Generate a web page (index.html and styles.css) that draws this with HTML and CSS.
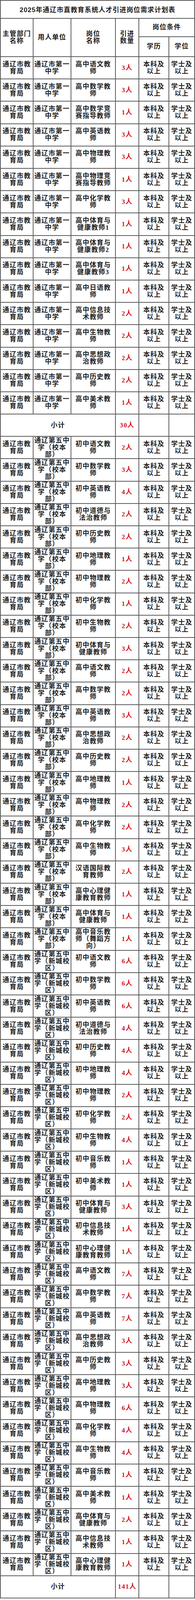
FILE: index.html
```html
<!DOCTYPE html>
<html lang="zh-CN">
<head>
<meta charset="utf-8">
<title>2025年通辽市直教育系统人才引进岗位需求计划表</title>
<link rel="stylesheet" href="styles.css">
</head>
<body>
<div class="plan">
<div class="c title"><span>2025年通辽市直教育系统人才引进岗位需求计划表</span></div>
<div class="c span2r"><span>主管部门<br>名称</span></div><div class="c span2r"><span>用人单位</span></div><div class="c span2r"><span>岗位<br>名称</span></div><div class="c span2r"><span>引进<br>数量</span></div><div class="c span2c"><span>岗位条件</span></div>
<div class="c"><span>学历</span></div><div class="c"><span>学位</span></div>

<div class="c"><span>通辽市教<br>育局</span></div><div class="c"><span>通辽市第一<br>中学</span></div><div class="c"><span>高中语文教<br>师</span></div><div class="c n"><span>3人</span></div><div class="c"><span>本科及<br>以上</span></div><div class="c"><span>学士及<br>以上</span></div>
<div class="c"><span>通辽市教<br>育局</span></div><div class="c"><span>通辽市第一<br>中学</span></div><div class="c"><span>高中数学教<br>师</span></div><div class="c n"><span>3人</span></div><div class="c"><span>本科及<br>以上</span></div><div class="c"><span>学士及<br>以上</span></div>
<div class="c"><span>通辽市教<br>育局</span></div><div class="c"><span>通辽市第一<br>中学</span></div><div class="c"><span>高中数学竞<br>赛指导教师</span></div><div class="c n"><span>1人</span></div><div class="c"><span>本科及<br>以上</span></div><div class="c"><span>学士及<br>以上</span></div>
<div class="c"><span>通辽市教<br>育局</span></div><div class="c"><span>通辽市第一<br>中学</span></div><div class="c"><span>高中英语教<br>师</span></div><div class="c n"><span>3人</span></div><div class="c"><span>本科及<br>以上</span></div><div class="c"><span>学士及<br>以上</span></div>
<div class="c"><span>通辽市教<br>育局</span></div><div class="c"><span>通辽市第一<br>中学</span></div><div class="c"><span>高中物理教<br>师</span></div><div class="c n"><span>3人</span></div><div class="c"><span>本科及<br>以上</span></div><div class="c"><span>学士及<br>以上</span></div>
<div class="c"><span>通辽市教<br>育局</span></div><div class="c"><span>通辽市第一<br>中学</span></div><div class="c"><span>高中物理竞<br>赛指导教师</span></div><div class="c n"><span>1人</span></div><div class="c"><span>本科及<br>以上</span></div><div class="c"><span>学士及<br>以上</span></div>
<div class="c"><span>通辽市教<br>育局</span></div><div class="c"><span>通辽市第一<br>中学</span></div><div class="c"><span>高中化学教<br>师</span></div><div class="c n"><span>3人</span></div><div class="c"><span>本科及<br>以上</span></div><div class="c"><span>学士及<br>以上</span></div>
<div class="c"><span>通辽市教<br>育局</span></div><div class="c"><span>通辽市第一<br>中学</span></div><div class="c"><span>高中体育与<br>健康教师1</span></div><div class="c n"><span>1人</span></div><div class="c"><span>本科及<br>以上</span></div><div class="c"><span>学士及<br>以上</span></div>
<div class="c"><span>通辽市教<br>育局</span></div><div class="c"><span>通辽市第一<br>中学</span></div><div class="c"><span>高中体育与<br>健康教师2</span></div><div class="c n"><span>1人</span></div><div class="c"><span>本科及<br>以上</span></div><div class="c"><span>学士及<br>以上</span></div>
<div class="c"><span>通辽市教<br>育局</span></div><div class="c"><span>通辽市第一<br>中学</span></div><div class="c"><span>高中体育与<br>健康教师3</span></div><div class="c n"><span>1人</span></div><div class="c"><span>本科及<br>以上</span></div><div class="c"><span>学士及<br>以上</span></div>
<div class="c"><span>通辽市教<br>育局</span></div><div class="c"><span>通辽市第一<br>中学</span></div><div class="c"><span>高中日语教<br>师</span></div><div class="c n"><span>1人</span></div><div class="c"><span>本科及<br>以上</span></div><div class="c"><span>学士及<br>以上</span></div>
<div class="c"><span>通辽市教<br>育局</span></div><div class="c"><span>通辽市第一<br>中学</span></div><div class="c"><span>高中信息技<br>术教师</span></div><div class="c n"><span>2人</span></div><div class="c"><span>本科及<br>以上</span></div><div class="c"><span>学士及<br>以上</span></div>
<div class="c"><span>通辽市教<br>育局</span></div><div class="c"><span>通辽市第一<br>中学</span></div><div class="c"><span>高中生物教<br>师</span></div><div class="c n"><span>2人</span></div><div class="c"><span>本科及<br>以上</span></div><div class="c"><span>学士及<br>以上</span></div>
<div class="c"><span>通辽市教<br>育局</span></div><div class="c"><span>通辽市第一<br>中学</span></div><div class="c"><span>高中思想政<br>治教师</span></div><div class="c n"><span>2人</span></div><div class="c"><span>本科及<br>以上</span></div><div class="c"><span>学士及<br>以上</span></div>
<div class="c"><span>通辽市教<br>育局</span></div><div class="c"><span>通辽市第一<br>中学</span></div><div class="c"><span>高中历史教<br>师</span></div><div class="c n"><span>2人</span></div><div class="c"><span>本科及<br>以上</span></div><div class="c"><span>学士及<br>以上</span></div>
<div class="c"><span>通辽市教<br>育局</span></div><div class="c"><span>通辽市第一<br>中学</span></div><div class="c"><span>高中美术教<br>师</span></div><div class="c n"><span>1人</span></div><div class="c"><span>本科及<br>以上</span></div><div class="c"><span>学士及<br>以上</span></div>
<div class="c span3c"><span>小计</span></div><div class="c n"><span>30人</span></div><div class="c"></div><div class="c"></div>

<div class="c"><span>通辽市教<br>育局</span></div><div class="c"><span>通辽第五中<br>学（校本<br>部）</span></div><div class="c"><span>初中语文教<br>师</span></div><div class="c n"><span>2人</span></div><div class="c"><span>本科及<br>以上</span></div><div class="c"><span>学士及<br>以上</span></div>
<div class="c"><span>通辽市教<br>育局</span></div><div class="c"><span>通辽第五中<br>学（校本<br>部）</span></div><div class="c"><span>初中数学教<br>师</span></div><div class="c n"><span>3人</span></div><div class="c"><span>本科及<br>以上</span></div><div class="c"><span>学士及<br>以上</span></div>
<div class="c"><span>通辽市教<br>育局</span></div><div class="c"><span>通辽第五中<br>学（校本<br>部）</span></div><div class="c"><span>初中英语教<br>师</span></div><div class="c n"><span>4人</span></div><div class="c"><span>本科及<br>以上</span></div><div class="c"><span>学士及<br>以上</span></div>
<div class="c"><span>通辽市教<br>育局</span></div><div class="c"><span>通辽第五中<br>学（校本<br>部）</span></div><div class="c"><span>初中道德与<br>法治教师</span></div><div class="c n"><span>2人</span></div><div class="c"><span>本科及<br>以上</span></div><div class="c"><span>学士及<br>以上</span></div>
<div class="c"><span>通辽市教<br>育局</span></div><div class="c"><span>通辽第五中<br>学（校本<br>部）</span></div><div class="c"><span>初中历史教<br>师</span></div><div class="c n"><span>2人</span></div><div class="c"><span>本科及<br>以上</span></div><div class="c"><span>学士及<br>以上</span></div>
<div class="c"><span>通辽市教<br>育局</span></div><div class="c"><span>通辽第五中<br>学（校本<br>部）</span></div><div class="c"><span>初中地理教<br>师</span></div><div class="c n"><span>1人</span></div><div class="c"><span>本科及<br>以上</span></div><div class="c"><span>学士及<br>以上</span></div>
<div class="c"><span>通辽市教<br>育局</span></div><div class="c"><span>通辽第五中<br>学（校本<br>部）</span></div><div class="c"><span>初中物理教<br>师</span></div><div class="c n"><span>2人</span></div><div class="c"><span>本科及<br>以上</span></div><div class="c"><span>学士及<br>以上</span></div>
<div class="c"><span>通辽市教<br>育局</span></div><div class="c"><span>通辽第五中<br>学（校本<br>部）</span></div><div class="c"><span>初中化学教<br>师</span></div><div class="c n"><span>1人</span></div><div class="c"><span>本科及<br>以上</span></div><div class="c"><span>学士及<br>以上</span></div>
<div class="c"><span>通辽市教<br>育局</span></div><div class="c"><span>通辽第五中<br>学（校本<br>部）</span></div><div class="c"><span>初中生物教<br>师</span></div><div class="c n"><span>2人</span></div><div class="c"><span>本科及<br>以上</span></div><div class="c"><span>学士及<br>以上</span></div>
<div class="c"><span>通辽市教<br>育局</span></div><div class="c"><span>通辽第五中<br>学（校本<br>部）</span></div><div class="c"><span>初中体育与<br>健康教师</span></div><div class="c n"><span>3人</span></div><div class="c"><span>本科及<br>以上</span></div><div class="c"><span>学士及<br>以上</span></div>
<div class="c"><span>通辽市教<br>育局</span></div><div class="c"><span>通辽第五中<br>学（校本<br>部）</span></div><div class="c"><span>高中语文教<br>师</span></div><div class="c n"><span>2人</span></div><div class="c"><span>本科及<br>以上</span></div><div class="c"><span>学士及<br>以上</span></div>
<div class="c"><span>通辽市教<br>育局</span></div><div class="c"><span>通辽第五中<br>学（校本<br>部）</span></div><div class="c"><span>高中数学教<br>师</span></div><div class="c n"><span>2人</span></div><div class="c"><span>本科及<br>以上</span></div><div class="c"><span>学士及<br>以上</span></div>
<div class="c"><span>通辽市教<br>育局</span></div><div class="c"><span>通辽第五中<br>学（校本<br>部）</span></div><div class="c"><span>高中英语教<br>师</span></div><div class="c n"><span>3人</span></div><div class="c"><span>本科及<br>以上</span></div><div class="c"><span>学士及<br>以上</span></div>
<div class="c"><span>通辽市教<br>育局</span></div><div class="c"><span>通辽第五中<br>学（校本<br>部）</span></div><div class="c"><span>高中思想政<br>治教师</span></div><div class="c n"><span>2人</span></div><div class="c"><span>本科及<br>以上</span></div><div class="c"><span>学士及<br>以上</span></div>
<div class="c"><span>通辽市教<br>育局</span></div><div class="c"><span>通辽第五中<br>学（校本<br>部）</span></div><div class="c"><span>高中历史教<br>师</span></div><div class="c n"><span>2人</span></div><div class="c"><span>本科及<br>以上</span></div><div class="c"><span>学士及<br>以上</span></div>
<div class="c"><span>通辽市教<br>育局</span></div><div class="c"><span>通辽第五中<br>学（校本<br>部）</span></div><div class="c"><span>高中地理教<br>师</span></div><div class="c n"><span>1人</span></div><div class="c"><span>本科及<br>以上</span></div><div class="c"><span>学士及<br>以上</span></div>
<div class="c"><span>通辽市教<br>育局</span></div><div class="c"><span>通辽第五中<br>学（校本<br>部）</span></div><div class="c"><span>高中物理教<br>师</span></div><div class="c n"><span>2人</span></div><div class="c"><span>本科及<br>以上</span></div><div class="c"><span>学士及<br>以上</span></div>
<div class="c"><span>通辽市教<br>育局</span></div><div class="c"><span>通辽第五中<br>学（校本<br>部）</span></div><div class="c"><span>高中化学教<br>师</span></div><div class="c n"><span>2人</span></div><div class="c"><span>本科及<br>以上</span></div><div class="c"><span>学士及<br>以上</span></div>
<div class="c"><span>通辽市教<br>育局</span></div><div class="c"><span>通辽第五中<br>学（校本<br>部）</span></div><div class="c"><span>高中生物教<br>师</span></div><div class="c n"><span>3人</span></div><div class="c"><span>本科及<br>以上</span></div><div class="c"><span>学士及<br>以上</span></div>
<div class="c"><span>通辽市教<br>育局</span></div><div class="c"><span>通辽第五中<br>学（校本<br>部）</span></div><div class="c"><span>汉语国际教<br>育教师</span></div><div class="c n"><span>2人</span></div><div class="c"><span>本科及<br>以上</span></div><div class="c"><span>学士及<br>以上</span></div>
<div class="c"><span>通辽市教<br>育局</span></div><div class="c"><span>通辽第五中<br>学（校本<br>部）</span></div><div class="c"><span>高中心理健<br>康教育教师</span></div><div class="c n"><span>1人</span></div><div class="c"><span>本科及<br>以上</span></div><div class="c"><span>学士及<br>以上</span></div>
<div class="c"><span>通辽市教<br>育局</span></div><div class="c"><span>通辽第五中<br>学（校本<br>部）</span></div><div class="c"><span>高中体育与<br>健康教师</span></div><div class="c n"><span>1人</span></div><div class="c"><span>本科及<br>以上</span></div><div class="c"><span>学士及<br>以上</span></div>
<div class="c"><span>通辽市教<br>育局</span></div><div class="c"><span>通辽第五中<br>学（校本<br>部）</span></div><div class="c"><span>高中音乐教<br>师（舞蹈方<br>向）</span></div><div class="c n"><span>1人</span></div><div class="c"><span>本科及<br>以上</span></div><div class="c"><span>学士及<br>以上</span></div>

<div class="c"><span>通辽市教<br>育局</span></div><div class="c"><span>通辽第五中<br>学（新城校<br>区）</span></div><div class="c"><span>初中语文教<br>师</span></div><div class="c n"><span>6人</span></div><div class="c"><span>本科及<br>以上</span></div><div class="c"><span>学士及<br>以上</span></div>
<div class="c"><span>通辽市教<br>育局</span></div><div class="c"><span>通辽第五中<br>学（新城校<br>区）</span></div><div class="c"><span>初中数学教<br>师</span></div><div class="c n"><span>6人</span></div><div class="c"><span>本科及<br>以上</span></div><div class="c"><span>学士及<br>以上</span></div>
<div class="c"><span>通辽市教<br>育局</span></div><div class="c"><span>通辽第五中<br>学（新城校<br>区）</span></div><div class="c"><span>初中英语教<br>师</span></div><div class="c n"><span>6人</span></div><div class="c"><span>本科及<br>以上</span></div><div class="c"><span>学士及<br>以上</span></div>
<div class="c"><span>通辽市教<br>育局</span></div><div class="c"><span>通辽第五中<br>学（新城校<br>区）</span></div><div class="c"><span>初中道德与<br>法治教师</span></div><div class="c n"><span>4人</span></div><div class="c"><span>本科及<br>以上</span></div><div class="c"><span>学士及<br>以上</span></div>
<div class="c"><span>通辽市教<br>育局</span></div><div class="c"><span>通辽第五中<br>学（新城校<br>区）</span></div><div class="c"><span>初中历史教<br>师</span></div><div class="c n"><span>4人</span></div><div class="c"><span>本科及<br>以上</span></div><div class="c"><span>学士及<br>以上</span></div>
<div class="c"><span>通辽市教<br>育局</span></div><div class="c"><span>通辽第五中<br>学（新城校<br>区）</span></div><div class="c"><span>初中地理教<br>师</span></div><div class="c n"><span>4人</span></div><div class="c"><span>本科及<br>以上</span></div><div class="c"><span>学士及<br>以上</span></div>
<div class="c"><span>通辽市教<br>育局</span></div><div class="c"><span>通辽第五中<br>学（新城校<br>区）</span></div><div class="c"><span>初中物理教<br>师</span></div><div class="c n"><span>2人</span></div><div class="c"><span>本科及<br>以上</span></div><div class="c"><span>学士及<br>以上</span></div>
<div class="c"><span>通辽市教<br>育局</span></div><div class="c"><span>通辽第五中<br>学（新城校<br>区）</span></div><div class="c"><span>初中化学教<br>师</span></div><div class="c n"><span>2人</span></div><div class="c"><span>本科及<br>以上</span></div><div class="c"><span>学士及<br>以上</span></div>
<div class="c"><span>通辽市教<br>育局</span></div><div class="c"><span>通辽第五中<br>学（新城校<br>区）</span></div><div class="c"><span>初中生物教<br>师</span></div><div class="c n"><span>4人</span></div><div class="c"><span>本科及<br>以上</span></div><div class="c"><span>学士及<br>以上</span></div>
<div class="c"><span>通辽市教<br>育局</span></div><div class="c"><span>通辽第五中<br>学（新城校<br>区）</span></div><div class="c"><span>初中音乐教<br>师</span></div><div class="c n"><span>1人</span></div><div class="c"><span>本科及<br>以上</span></div><div class="c"><span>学士及<br>以上</span></div>
<div class="c"><span>通辽市教<br>育局</span></div><div class="c"><span>通辽第五中<br>学（新城校<br>区）</span></div><div class="c"><span>初中美术教<br>师</span></div><div class="c n"><span>1人</span></div><div class="c"><span>本科及<br>以上</span></div><div class="c"><span>学士及<br>以上</span></div>
<div class="c"><span>通辽市教<br>育局</span></div><div class="c"><span>通辽第五中<br>学（新城校<br>区）</span></div><div class="c"><span>初中体育与<br>健康教师</span></div><div class="c n"><span>3人</span></div><div class="c"><span>本科及<br>以上</span></div><div class="c"><span>学士及<br>以上</span></div>
<div class="c"><span>通辽市教<br>育局</span></div><div class="c"><span>通辽第五中<br>学（新城校<br>区）</span></div><div class="c"><span>初中信息技<br>术教师</span></div><div class="c n"><span>1人</span></div><div class="c"><span>本科及<br>以上</span></div><div class="c"><span>学士及<br>以上</span></div>
<div class="c"><span>通辽市教<br>育局</span></div><div class="c"><span>通辽第五中<br>学（新城校<br>区）</span></div><div class="c"><span>初中心理健<br>康教育教师</span></div><div class="c n"><span>1人</span></div><div class="c"><span>本科及<br>以上</span></div><div class="c"><span>学士及<br>以上</span></div>
<div class="c"><span>通辽市教<br>育局</span></div><div class="c"><span>通辽第五中<br>学（新城校<br>区）</span></div><div class="c"><span>高中语文教<br>师</span></div><div class="c n"><span>7人</span></div><div class="c"><span>本科及<br>以上</span></div><div class="c"><span>学士及<br>以上</span></div>
<div class="c"><span>通辽市教<br>育局</span></div><div class="c"><span>通辽第五中<br>学（新城校<br>区）</span></div><div class="c"><span>高中数学教<br>师</span></div><div class="c n"><span>7人</span></div><div class="c"><span>本科及<br>以上</span></div><div class="c"><span>学士及<br>以上</span></div>
<div class="c"><span>通辽市教<br>育局</span></div><div class="c"><span>通辽第五中<br>学（新城校<br>区）</span></div><div class="c"><span>高中英语教<br>师</span></div><div class="c n"><span>7人</span></div><div class="c"><span>本科及<br>以上</span></div><div class="c"><span>学士及<br>以上</span></div>
<div class="c"><span>通辽市教<br>育局</span></div><div class="c"><span>通辽第五中<br>学（新城校<br>区）</span></div><div class="c"><span>高中思想政<br>治教师</span></div><div class="c n"><span>3人</span></div><div class="c"><span>本科及<br>以上</span></div><div class="c"><span>学士及<br>以上</span></div>
<div class="c"><span>通辽市教<br>育局</span></div><div class="c"><span>通辽第五中<br>学（新城校<br>区）</span></div><div class="c"><span>高中历史教<br>师</span></div><div class="c n"><span>3人</span></div><div class="c"><span>本科及<br>以上</span></div><div class="c"><span>学士及<br>以上</span></div>
<div class="c"><span>通辽市教<br>育局</span></div><div class="c"><span>通辽第五中<br>学（新城校<br>区）</span></div><div class="c"><span>高中地理教<br>师</span></div><div class="c n"><span>3人</span></div><div class="c"><span>本科及<br>以上</span></div><div class="c"><span>学士及<br>以上</span></div>
<div class="c"><span>通辽市教<br>育局</span></div><div class="c"><span>通辽第五中<br>学（新城校<br>区）</span></div><div class="c"><span>高中物理教<br>师</span></div><div class="c n"><span>6人</span></div><div class="c"><span>本科及<br>以上</span></div><div class="c"><span>学士及<br>以上</span></div>
<div class="c"><span>通辽市教<br>育局</span></div><div class="c"><span>通辽第五中<br>学（新城校<br>区）</span></div><div class="c"><span>高中化学教<br>师</span></div><div class="c n"><span>4人</span></div><div class="c"><span>本科及<br>以上</span></div><div class="c"><span>学士及<br>以上</span></div>
<div class="c"><span>通辽市教<br>育局</span></div><div class="c"><span>通辽第五中<br>学（新城校<br>区）</span></div><div class="c"><span>高中生物教<br>师</span></div><div class="c n"><span>4人</span></div><div class="c"><span>本科及<br>以上</span></div><div class="c"><span>学士及<br>以上</span></div>
<div class="c"><span>通辽市教<br>育局</span></div><div class="c"><span>通辽第五中<br>学（新城校<br>区）</span></div><div class="c"><span>高中音乐教<br>师</span></div><div class="c n"><span>1人</span></div><div class="c"><span>本科及<br>以上</span></div><div class="c"><span>学士及<br>以上</span></div>
<div class="c"><span>通辽市教<br>育局</span></div><div class="c"><span>通辽第五中<br>学（新城校<br>区）</span></div><div class="c"><span>高中美术教<br>师</span></div><div class="c n"><span>1人</span></div><div class="c"><span>本科及<br>以上</span></div><div class="c"><span>学士及<br>以上</span></div>
<div class="c"><span>通辽市教<br>育局</span></div><div class="c"><span>通辽第五中<br>学（新城校<br>区）</span></div><div class="c"><span>高中体育与<br>健康教师</span></div><div class="c n"><span>2人</span></div><div class="c"><span>本科及<br>以上</span></div><div class="c"><span>学士及<br>以上</span></div>
<div class="c"><span>通辽市教<br>育局</span></div><div class="c"><span>通辽第五中<br>学（新城校<br>区）</span></div><div class="c"><span>高中信息技<br>术教师</span></div><div class="c n"><span>1人</span></div><div class="c"><span>本科及<br>以上</span></div><div class="c"><span>学士及<br>以上</span></div>
<div class="c"><span>通辽市教<br>育局</span></div><div class="c"><span>通辽第五中<br>学（新城校<br>区）</span></div><div class="c"><span>高中心理健<br>康教育教师</span></div><div class="c n"><span>1人</span></div><div class="c"><span>本科及<br>以上</span></div><div class="c"><span>学士及<br>以上</span></div>
<div class="c span3c"><span>小计</span></div><div class="c n"><span>141人</span></div><div class="c"></div><div class="c"></div>
</div>
</body>
</html>
```

FILE: styles.css
```css
html, body {
  margin: 0;
  padding: 0;
  background: #ffffff;
}

.plan {
  box-sizing: border-box;
  width: 500px;
  display: grid;
  grid-template-columns: 84px 97px 114px 60px 77px 66px;
  grid-template-rows: 46.1px 46.6px 51.4px;
  grid-auto-rows: 57.2px;
  border-top: 2px solid #5c5c5c;
  border-left: 2px solid #5c5c5c;
  font-family: "Liberation Serif", "Noto Sans CJK SC", serif;
  font-weight: 700;
  font-size: 17px;
  line-height: 18px;
  letter-spacing: 1.2px;
  color: #1e1e1e;
}

.c {
  box-sizing: border-box;
  border-right: 2px solid #5c5c5c;
  border-bottom: 2px solid #5c5c5c;
  display: flex;
  align-items: center;
  justify-content: center;
  text-align: center;
  overflow: hidden;
  min-width: 0;
  min-height: 0;
}

.c > span {
  display: block;
}

.title {
  grid-column: span 6;
  font-family: "Liberation Sans", "Noto Sans CJK SC", sans-serif;
  letter-spacing: 0.9px;
  padding-top: 3px;
}

.span2r { grid-row: span 2; }
.span2c { grid-column: span 2; }
.span3c { grid-column: span 3; }

.n {
  color: #d3161c;
}
```
